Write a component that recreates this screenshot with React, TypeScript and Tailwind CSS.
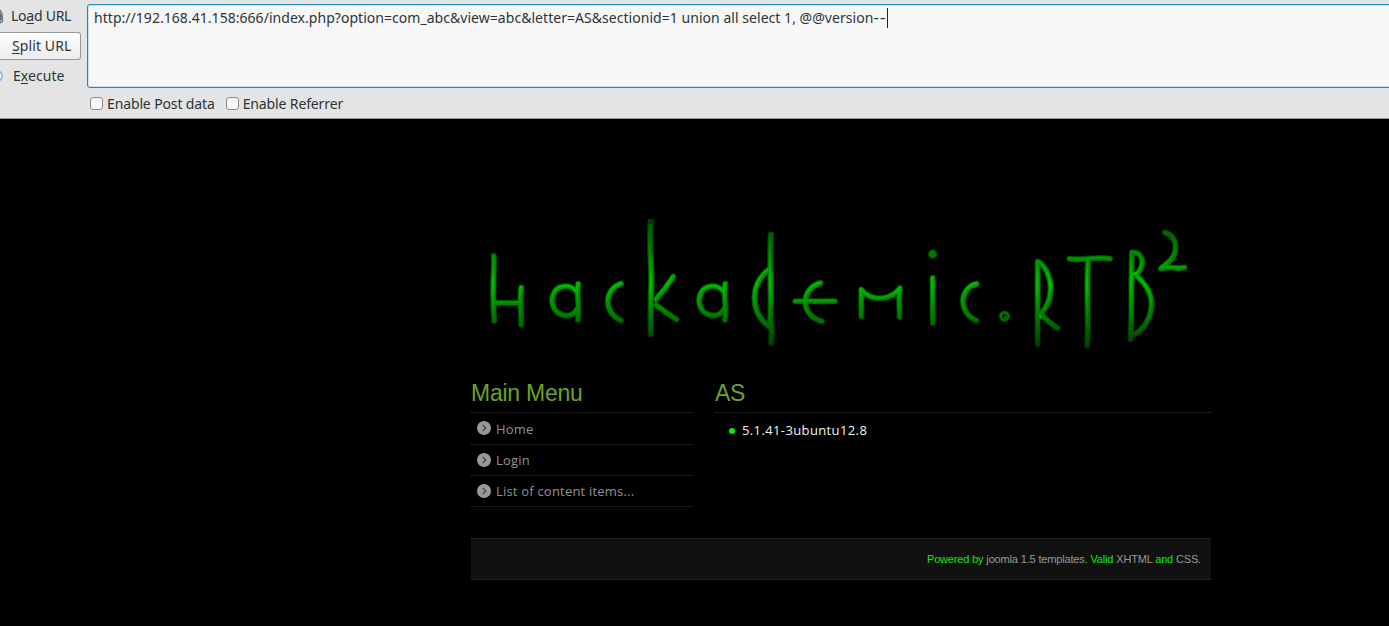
import React from 'react';

const strokes = [
  'M493.7 256 C495 270 491.5 288 494.3 321',
  'M494.5 303 H520',
  'M521.3 287.5 C519 300 522 312 521 325',
  'M577 292 C572 284 555 283 552.3 298 C550 316 572 321 577 309',
  'M578.3 283.8 C576 293 580 308 577.9 320',
  'M621 283.7 C604 289 603 313 621 320.3',
  'M724 292 C719 284 702 283 699.3 298 C697 316 719 321 724 309',
  'M725.3 283.8 C723 293 727 308 724.9 320',
  'M673.3 276.5 C668 285 661 294 654 301.5 M655.5 304.5 C662 309 669 315 676.5 319.5',
  'M768.8 269.5 C750 284 749 312 770 327.5',
  'M820.5 283 C801 288 799 315 822 321.5',
  'M795.3 301.2 H835',
  'M861.3 316.5 V289.5 C866 296 874 298.5 880 298.3 C888 298 895 295 900 288.2 C898 298 900 307 899.5 317',
  'M932.7 277.8 V323',
  'M976.7 283.7 C959 288 958 313 976.3 320.3',
  'M1037.7 344.5 V261.5 C1044 264 1051 276 1050.7 290 C1050 300 1047 308 1040.5 314 C1045 318 1051 324 1057.5 328',
  'M1069.5 258.7 C1082 261 1097 256 1110 258.8',
  'M1088.3 260 C1086 288 1089 317 1087.2 346',
  'M1130.7 339.5 C1132 311 1131 282 1132 252.3 C1139 252 1143 257 1142 264 C1141 269 1139 273 1135.3 274.7 C1143 281 1152 292 1151.5 305 C1151 318 1143 331 1133 335',
  'M1165 232.5 C1174 235 1178 245 1174 255 C1171 262 1165 264 1161 268.5 C1169 266 1177 269 1184.5 267.5',
];

const tallStrokes = [
  'M650.7 222 C648.5 248 653 273 650.9 294 L650.8 334',
  'M771 234.7 C769 264 772 296 770.2 320 C773 329 771 336 771.3 343',
];

function Logo() {
  return (
    <svg className="block h-[145px] w-[730px]" viewBox="471 210 730 145" fill="none" strokeLinecap="round" strokeLinejoin="round" role="img">
      <defs>
        <linearGradient id="edge" gradientUnits="userSpaceOnUse" x1="0" y1="218" x2="0" y2="350">
          <stop offset="0" stopColor="#003000" />
          <stop offset=".5" stopColor="#005a00" />
          <stop offset="1" stopColor="#002200" />
        </linearGradient>
        <linearGradient id="body" gradientUnits="userSpaceOnUse" x1="0" y1="218" x2="0" y2="350">
          <stop offset="0" stopColor="#004c00" />
          <stop offset=".3" stopColor="#007c00" />
          <stop offset=".52" stopColor="#009c00" />
          <stop offset=".78" stopColor="#006a00" />
          <stop offset="1" stopColor="#003400" />
        </linearGradient>
        <linearGradient id="shine" gradientUnits="userSpaceOnUse" x1="0" y1="218" x2="0" y2="350">
          <stop offset="0" stopColor="#005000" />
          <stop offset=".25" stopColor="#008800" />
          <stop offset=".5" stopColor="#00c800" />
          <stop offset=".75" stopColor="#007c00" />
          <stop offset="1" stopColor="#003c00" />
        </linearGradient>
      </defs>
      <g stroke="url(#edge)" strokeWidth="6.1">
        {strokes.map((d) => <path key={d} d={d} />)}
        {tallStrokes.map((d) => <path key={d} d={d} strokeWidth="6.5" />)}
      </g>
      <g stroke="url(#body)" strokeWidth="4.5">
        {strokes.map((d) => <path key={d} d={d} />)}
        {tallStrokes.map((d) => <path key={d} d={d} />)}
      </g>
      <g stroke="url(#shine)" strokeWidth="1.7" transform="translate(-.5 -.5)">
        {strokes.map((d) => <path key={d} d={d} />)}
        {tallStrokes.map((d) => <path key={d} d={d} />)}
      </g>
      <path d="M648 219 H653.5 V224 H648 Z" fill="#003a00" />
      <circle cx="932.7" cy="254.3" r="4.7" fill="#005000" />
      <circle cx="932.5" cy="254" r="3.5" fill="#007800" />
      <circle cx="1004.5" cy="316.3" r="3.7" stroke="#005000" strokeWidth="3.8" />
      <circle cx="1004.5" cy="316.3" r="3.7" stroke="#007400" strokeWidth="2" />
      <circle cx="1005" cy="316.8" r="1" fill="#009400" />
      <path d="M651 301 L654 298.5 L656 303 L653.5 306 Z" stroke="#008a00" strokeWidth="1.5" fill="#003c00" />
      <path d="M1133 274 L1136 272.5 M1039.5 315 L1041 318" stroke="#00c000" strokeWidth="1.5" />
    </svg>
  );
}

function MenuItem({ children, className, iconClass = '' }: { children: React.ReactNode; className: string; iconClass?: string }) {
  return (
    <li className={`flex items-center border-b border-dotted border-[#303030] pl-[6px] ${className}`}>
      <svg className={`mr-[5px] h-[14px] w-[14px] shrink-0 ${iconClass}`} viewBox="0 0 14 14">
        <circle cx="7" cy="7" r="7" fill="#989898" />
        <path d="M5.8 4 L8.8 7 L5.8 10" stroke="#444" strokeWidth="1.2" fill="none" />
      </svg>
      <span className="pt-[2px]">{children}</span>
    </li>
  );
}

function Checkbox({ children }: { children: React.ReactNode }) {
  return (
    <label className="flex items-center gap-[4px]">
      <span className="h-[13px] w-[13px] rounded-[3px] border border-[#8b8b8b] bg-[#f8f8f8]" />
      <span className="leading-[18px]">{children}</span>
    </label>
  );
}

export default function App() {
  return (
    <div className="h-[626px] w-full overflow-hidden bg-black">
      <header className="flex h-[119px] overflow-hidden border-b border-[#999] bg-[#e4e4e4] font-['Noto_Sans',sans-serif] text-[14px] text-[#2e3436]">
        <div className="w-[87px] shrink-0 whitespace-nowrap">
          <div className="flex h-[32px] items-center">
            <svg className="h-[16px] w-[11px]" viewBox="0 0 11 16">
              <path d="M0 2 C2 4 3 8 2.5 14 L0 15 Z" fill="#bbb" stroke="#666" strokeWidth="1" />
              <path d="M0 7 H2 M0 9 H2 M0 11 H2" stroke="#444" strokeWidth="1" />
            </svg>
            <span className="pb-[2px] tracking-[-0.25px]">Lo<u className="underline-offset-2">a</u>d URL</span>
          </div>
          <div className="flex h-[28px] w-[81px] items-center rounded-r-[3px] border border-l-0 border-[#989898] bg-linear-to-b from-white to-[#ececec] pl-[12px]">
            <span className="pb-[2px] tracking-[0.1px]"><u className="underline-offset-2">S</u>plit URL</span>
          </div>
          <div className="flex h-[32px] items-center">
            <svg className="h-[16px] w-[13px]" viewBox="0 0 13 16">
              <circle cx="-3" cy="8" r="5.2" fill="#f4f8ff" stroke="#8fb1e6" strokeWidth="1.6" />
            </svg>
            <span className="pb-[2px] tracking-[0.05px]">E<u className="underline-offset-2">x</u>ecute</span>
          </div>
        </div>
        <div className="min-w-0 flex-1 pt-[4px]">
          <div className="-mr-2 flex h-[84px] rounded-[3px] border border-[#2385bd] bg-[#f7f7f7] pl-[6px] pt-[3px] shadow-[inset_0_0_0_1px_#c5e5f4]">
            <span className="whitespace-nowrap leading-[19px] tracking-[0.04px]">
              http://192.168.41.158:666/index.php?option=com_abc&amp;view=abc&amp;letter=AS&amp;sectionid=1 union all select 1, @@version<span className="text-[17px] leading-none tracking-[1.2px]">--</span>
            </span>
            <span className="h-[20px] w-px bg-[#222]" />
          </div>
          <div className="flex h-[31px] items-center gap-[11px] pl-[3px] tracking-[-0.13px]">
            <Checkbox>Enable Post data</Checkbox>
            <Checkbox>Enable Referrer</Checkbox>
          </div>
        </div>
      </header>
      <main className="ml-[471px] w-[740px] pt-[91px]">
        <Logo />
        <div className="flex gap-[22px] pt-[24px]">
          <section className="w-[222px]">
            <h3 className="h-[34px] border-b border-dotted border-[#303030] font-['Liberation_Sans',sans-serif] text-[23px] leading-[28px] tracking-[-0.25px] text-[#6aa329]">Main Menu</h3>
            <ul className="font-['Open_Sans',sans-serif] text-[13px] tracking-[0.2px] text-[#929292]">
              <MenuItem className="h-[32px]" iconClass="mb-[2px]">Home</MenuItem>
              <MenuItem className="h-[31px]">Login</MenuItem>
              <MenuItem className="h-[31px]">List of content items...</MenuItem>
            </ul>
          </section>
          <section className="w-[496px]">
            <h3 className="h-[34px] border-b border-dotted border-[#303030] font-['Liberation_Sans',sans-serif] text-[23px] leading-[28px] tracking-[-0.3px] text-[#6aa329]">AS</h3>
            <div className="flex h-[36px] items-center pl-[14px] font-['Open_Sans',sans-serif] text-[13px] text-[#f2f2f2]">
              <span className="mr-[7px] h-[6px] w-[6px] rounded-full bg-[#00f000]" />
              <span className="tracking-[0.38px]">5.1.41-3ubuntu12.8</span>
            </div>
          </section>
        </div>
        <footer className="mt-[31px] flex h-[42px] items-center justify-end border-y border-dotted border-[#303030] bg-[#111] pr-[10px] pb-[1px] font-['Liberation_Sans',sans-serif] text-[11px] leading-[16px] tracking-[-0.16px] text-[#00f000]">
          <p>Powered by <a className="text-[#999]">joomla 1.5 templates</a>. Valid <a className="text-[#999]">XHTML</a> and <a className="text-[#999]">CSS</a>.</p>
        </footer>
      </main>
    </div>
  );
}
